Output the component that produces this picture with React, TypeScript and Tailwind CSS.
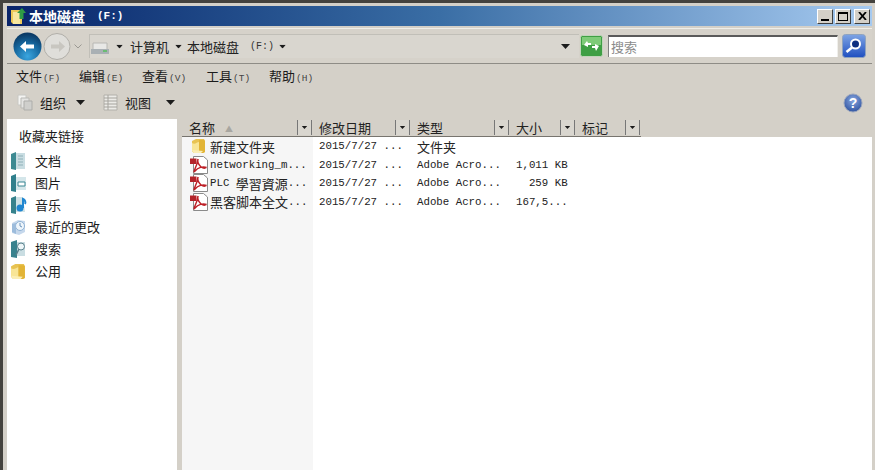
import type { ReactNode } from 'react';

const ZH = "font-['Noto_Sans_CJK_SC','Noto_Sans_CJK_TC',sans-serif]";
const MONO = "font-['Liberation_Mono','Noto_Sans_CJK_SC',monospace]";

function Caret({ className = '' }: { className?: string }) {
  return (
    <svg width="9" height="5" viewBox="0 0 9 5" className={className}>
      <path d="M0 0h9L4.500 5z" fill="#1c1c1c" />
    </svg>
  );
}

function Small({ children }: { children: ReactNode }) {
  return <span className={`${MONO} text-[9.500px] text-[#444] ml-[1px]`}>{children}</span>;
}

function FolderIcon({ size = 16 }: { size?: number }) {
  return (
    <svg width={size} height={size} viewBox="0 0 16 16">
      <path d="M1 3l4-2h8l1 2v11l-2 1H3l-2-2z" fill="#e8c352" />
      <path d="M1 5c3 2 5-1 7-1v11H3l-2-2z" fill="#f8e596" />
      <path d="M8 2h5l1 1v11l-2 1H8z" fill="#e2b436" />
      <path d="M1 12l2 3h7l2-2z" fill="#fbeeb5" />
    </svg>
  );
}

function PdfIcon() {
  return (
    <svg width="18" height="18" viewBox="0 0 18 18" className="shrink-0">
      <path d="M3.500 .5h10l4 3.500v13.500h-14z" fill="#fff" stroke="#8a8a8a" />
      <path d="M0 2.500h6.500v5.500H0z" fill="#b3242a" />
      <path
        d="M8 3c-1 3 1 6 3 8 1.500 1 4 1.500 5.500.5M16.500 11.500C13 10 8 11.500 5 15c-.8 1-1.500 1.500-.5-1 1.500-3 3-6 3.500-11"
        fill="none"
        stroke="#bd1f26"
        strokeWidth="1.500"
      />
    </svg>
  );
}

function NavIcon({ kind }: { kind: string }) {
  if (kind === 'doc')
    return (
      <svg width="17" height="18" viewBox="0 0 17 18">
        <path d="M1 2l5-2v18l-5-1z" fill="#3d8a92" />
        <path d="M6 1h9v16H6z" fill="#c9dde2" />
        <path d="M8 4h5M8 7h5M8 10h5M8 13h5" stroke="#8fb0b8" />
      </svg>
    );
  if (kind === 'pic')
    return (
      <svg width="17" height="18" viewBox="0 0 17 18">
        <path d="M1 2l5-2v18l-5-1z" fill="#2f7f8c" />
        <path d="M6 3h10v13H6z" fill="#d4e6ea" />
        <path d="M8 8h7v4H8z" fill="#fff" stroke="#3b8794" />
      </svg>
    );
  if (kind === 'music')
    return (
      <svg width="17" height="18" viewBox="0 0 17 18">
        <path d="M1 2l5-2v18l-5-1z" fill="#36828c" />
        <path d="M6 1h7l2 15H6z" fill="#cfe2e6" />
        <circle cx="10" cy="12" r="3.500" fill="#1f86d0" />
        <path d="M13 12V3c2 1 3 3 2 5" fill="none" stroke="#1f86d0" strokeWidth="2" />
      </svg>
    );
  if (kind === 'recent')
    return (
      <svg width="17" height="18" viewBox="0 0 17 18">
        <path d="M2 5l6-3 7 1v11l-6 3-7-2z" fill="#c6d8ec" />
        <circle cx="10" cy="8" r="4.500" fill="#eef5fb" stroke="#8fb2d4" />
        <path d="M10 5v3l2 1" fill="none" stroke="#6a93bb" />
        <path d="M2 6l4-1v11l-4-2z" fill="#9dbcdc" />
      </svg>
    );
  if (kind === 'search')
    return (
      <svg width="17" height="18" viewBox="0 0 17 18">
        <path d="M1 2l6-2v18l-6-1z" fill="#39828e" />
        <path d="M7 2h8v14H7z" fill="#c9dde2" />
        <circle cx="11" cy="6.500" r="3.500" fill="#eef6f8" stroke="#59808c" />
        <path d="M9 9l-3 6" stroke="#59808c" strokeWidth="1.500" />
      </svg>
    );
  return <FolderIcon size={17} />;
}

function WinButton({ children }: { children: ReactNode }) {
  return (
    <div className="w-[16px] h-[15px] bg-[#d4d0c8] border border-t-white border-l-white border-r-[#404040] border-b-[#404040] flex items-center justify-center">
      {children}
    </div>
  );
}

function TitleBar() {
  return (
    <div className="h-[20px] flex items-center pl-[3px] pr-[2px] bg-gradient-to-r from-[#0a246a] via-[#3a6ea5] to-[#a6caf0]">
      <svg width="17" height="18" viewBox="0 0 17 18">
        <path d="M1 3h11v14H3l-2-2z" fill="#ecc95a" />
        <path d="M3 5h7v12H3z" fill="#f7e7a0" />
        <path d="M12 1l4 5h-2.500v6h-4V6H7z" fill="#2f9a45" />
      </svg>
      <span className={`${ZH} ml-[2px] text-[14px] font-bold text-white leading-none`}>本地磁盘</span>
      <span className={`${MONO} ml-[12px] text-[11px] font-bold text-white leading-none`}>(F:)</span>
      <div className="ml-auto flex gap-[2px]">
        <WinButton>
          <div className="w-[8px] h-[2px] bg-black mt-[8px]" />
        </WinButton>
        <WinButton>
          <div className="w-[10px] h-[9px] border border-black border-t-2" />
        </WinButton>
        <div className="ml-[1px]">
          <WinButton>
            <svg width="9" height="8" viewBox="0 0 9 8">
              <path d="M1 0l7 8M8 0L1 8" stroke="#000" strokeWidth="1.800" />
            </svg>
          </WinButton>
        </div>
      </div>
    </div>
  );
}

function AddressBar() {
  return (
    <div className="mt-[2px] h-[36px] flex items-center bg-[#d6d2ca] border-y border-t-[#efeee9] border-b-[#8e8c86] pl-[6px] pr-[6px]">
      <svg width="29" height="29" viewBox="0 0 29 29" className="shrink-0">
        <defs>
          <radialGradient id="orb" cx="50%" cy="85%" r="80%">
            <stop offset="0" stopColor="#3aa6e0" />
            <stop offset="0.6" stopColor="#16679e" />
            <stop offset="1" stopColor="#0b3a66" />
          </radialGradient>
        </defs>
        <circle cx="14.500" cy="14.500" r="14" fill="url(#orb)" />
        <path d="M7 14.500l6-5.500v3.500h8v4h-8V20z" fill="#fff" />
      </svg>
      <svg width="30" height="29" viewBox="0 0 30 29" className="shrink-0 ml-[1px]">
        <circle cx="14" cy="14.500" r="13" fill="#dfdeda" stroke="#b1afa9" />
        <path d="M22 14.500l-6-5.500v3.500H8v4h8V20z" fill="#c8c6c0" />
      </svg>
      <svg width="8" height="5" viewBox="0 0 8 5" className="shrink-0 ml-[1px]">
        <path d="M.5.500L4 4 7.500.500" fill="none" stroke="#9b9993" />
      </svg>
      <div className="ml-[7px] flex-1 h-[24px] flex items-center border-l border-t border-[#c1bfb8] border-r-0 bg-[#d9d6cf] pl-[1px]">
        <svg width="18" height="13" viewBox="0 0 18 13" className="mt-[4px]">
          <path d="M2 1h14v7H2z" fill="#e8e8e6" stroke="#b8b8b4" />
          <path d="M0 7h18v5H0z" fill="#a9b0b4" />
          <path d="M12 9h4" stroke="#56c05c" strokeWidth="1.500" />
        </svg>
        <Caret className="ml-[6px] scale-75" />
        <span className={`${ZH} ml-[6px] text-[13px] text-[#222]`}>计算机</span>
        <Caret className="ml-[5px] scale-75" />
        <span className={`${ZH} ml-[4px] text-[13px] text-[#222]`}>本地磁盘</span>
        <span className={`${MONO} ml-[11px] text-[10px] text-[#333]`}>(F:)</span>
        <Caret className="ml-[4px] scale-75" />
        <Caret className="ml-auto mr-[9px]" />
      </div>
      <svg width="23" height="22" viewBox="0 0 23 22" className="shrink-0 ml-[1px]">
        <rect x=".5" y=".5" width="22" height="21" rx="2" fill="#3f9f44" stroke="#c1d4ba" />
        <rect x="2" y="2" width="19" height="8" fill="#7ecb78" />
        <path d="M4 10l3-4 1 2h3v2H8v2zM19 11l-3 5-1-3h-3v-2h3V9z" fill="#fff" />
      </svg>
      <div className="ml-[5px] w-[230px] h-[22px] bg-white border-t-2 border-l border-t-[#5a5a5a] border-l-[#808080] border-r border-r-[#f0efeb] flex items-center pl-[2px]">
        <span className={`${ZH} text-[13px] text-[#8b8b8b]`}>搜索</span>
      </div>
      <svg width="24" height="24" viewBox="0 0 24 24" className="shrink-0 ml-[4px]">
        <defs>
          <linearGradient id="sb" x1="0" y1="0" x2="0" y2="1">
            <stop offset="0" stopColor="#7ea4e4" />
            <stop offset="1" stopColor="#1f4fc0" />
          </linearGradient>
        </defs>
        <rect x=".5" y=".5" width="23" height="23" rx="3" fill="url(#sb)" stroke="#8ea3bf" />
        <circle cx="13.500" cy="10" r="4.500" fill="#0e2f80" stroke="#fff" strokeWidth="2" />
        <path d="M10 13.500L4.500 18" stroke="#fff" strokeWidth="2.500" />
      </svg>
    </div>
  );
}

const MENU = [
  { label: '文件', key: '(F)', width: 'w-[63px]' },
  { label: '编辑', key: '(E)', width: 'w-[63px]' },
  { label: '查看', key: '(V)', width: 'w-[64px]' },
  { label: '工具', key: '(T)', width: 'w-[63px]' },
  { label: '帮助', key: '(H)', width: 'w-[63px]' },
];

function MenuBar() {
  return (
    <div className="h-[25px] pl-[9px] flex items-center">
      {MENU.map((m) => (
        <div key={m.label} className={`${m.width} flex items-baseline`}>
          <span className={`${ZH} text-[13px] text-[#1b1b1b]`}>{m.label}</span>
          <Small>{m.key}</Small>
        </div>
      ))}
    </div>
  );
}

function Toolbar() {
  return (
    <div className="h-[27px] pl-[10px] pr-[9px] flex items-center">
      <svg width="16" height="17" viewBox="0 0 16 17">
        <path d="M1 1h8v10H1z" fill="#f4f4f2" stroke="#c8c8c4" />
        <path d="M4 4h8v10H4z" fill="#e4e4e2" stroke="#b9b9b5" />
        <path d="M7 7h8v9H7z" fill="#cfcfcc" stroke="#adadaa" />
      </svg>
      <span className={`${ZH} ml-[7px] text-[13px] text-[#1b1b1b]`}>组织</span>
      <Caret className="ml-[10px]" />
      <svg width="15" height="17" viewBox="0 0 15 17" className="ml-[18px]">
        <path d="M1 1h13v15H1z" fill="#ecebe7" stroke="#b2b0aa" />
        <path d="M5 1v15M1 4h13M1 7h13M1 10h13M1 13h13" stroke="#a5a39d" />
      </svg>
      <span className={`${ZH} ml-[7px] text-[13px] text-[#1b1b1b]`}>视图</span>
      <Caret className="ml-[15px]" />
      <svg width="20" height="20" viewBox="0 0 20 20" className="ml-auto">
        <defs>
          <radialGradient id="help" cx="50%" cy="35%" r="70%">
            <stop offset="0" stopColor="#8aa8e0" />
            <stop offset="1" stopColor="#2a4e9c" />
          </radialGradient>
        </defs>
        <circle cx="10" cy="10" r="9" fill="url(#help)" stroke="#9aa5bd" />
        <text x="10" y="15" textAnchor="middle" fontSize="14" fontWeight="700" fontFamily="Liberation Sans" fill="#fff">
          ?
        </text>
      </svg>
    </div>
  );
}

const NAV = [
  { icon: 'doc', label: '文档' },
  { icon: 'pic', label: '图片' },
  { icon: 'music', label: '音乐' },
  { icon: 'recent', label: '最近的更改' },
  { icon: 'search', label: '搜索' },
  { icon: 'public', label: '公用' },
];

function Sidebar() {
  return (
    <div className="w-[170px] shrink-0 bg-white pl-[3px]">
      <div className={`${ZH} pl-[9px] pt-[7px] h-[31px] text-[13px] text-[#1b1b1b]`}>收藏夹链接</div>
      {NAV.map((n) => (
        <div key={n.label} className="h-[22px] flex items-center">
          <NavIcon kind={n.icon} />
          <span className={`${ZH} ml-[8px] text-[13px] text-[#1b1b1b]`}>{n.label}</span>
        </div>
      ))}
    </div>
  );
}

function HeaderCell({ label, sorted }: { label: string; sorted?: boolean }) {
  return (
    <div className="w-full h-[18px] shrink-0 flex items-center border-b border-[#77746e]">
      <span className={`${ZH} flex-1 ${sorted ? 'pl-[7px]' : 'pl-[6px]'} text-[13px] leading-none text-[#222]`}>
        {label}
        {sorted && <span className="ml-[10px] inline-block text-[8px] text-[#a8a6a0] align-middle">▲</span>}
      </span>
      <div className="w-[15px] h-[15px] mr-[1px] bg-[#d9d6cf] border-x border-[#777] flex items-center justify-center">
        <Caret className="scale-[0.6]" />
      </div>
    </div>
  );
}

function Cell({ children }: { children: ReactNode }) {
  return (
    <div className={`h-[18.500px] flex items-center whitespace-pre text-[10.750px] text-[#222] ${MONO}`}>
      {children}
    </div>
  );
}

function Zh({ children }: { children: ReactNode }) {
  return <span className={`${ZH} text-[13px]`}>{children}</span>;
}

function Column({
  label,
  width,
  sorted,
  tint,
  cells,
}: {
  label: string;
  width: string;
  sorted?: boolean;
  tint?: boolean;
  cells: ReactNode;
}) {
  return (
    <div className={`${width} shrink-0 flex flex-col`}>
      <div className="bg-[#d4d0c8]">
        <HeaderCell label={label} sorted={sorted} />
      </div>
      <div className={`flex-1 ${tint ? 'bg-[#f6f6f6]' : 'bg-white'}`}>{cells}</div>
    </div>
  );
}

function FileList() {
  const dates = ['2015/7/27 ...', '2015/7/27 ...', '2015/7/27 ...', '2015/7/27 ...'];
  return (
    <div className="flex-1 flex bg-white">
      <Column
        label="名称"
        sorted
        tint
        width="w-[131px]"
        cells={
          <div className="pl-[8px]">
            <Cell>
              <span className="w-[20px] pl-[1px]">
                <FolderIcon />
              </span>
              <Zh>新建文件夹</Zh>
            </Cell>
            <Cell>
              <span className="w-[20px]">
                <PdfIcon />
              </span>
              networking_m...
            </Cell>
            <Cell>
              <span className="w-[20px]">
                <PdfIcon />
              </span>
              PLC <span className="font-['Noto_Sans_CJK_TC',sans-serif] text-[13px]">學習資源</span>...
            </Cell>
            <Cell>
              <span className="w-[20px]">
                <PdfIcon />
              </span>
              <Zh>黑客脚本全文</Zh>...
            </Cell>
          </div>
        }
      />
      <Column
        label="修改日期"
        width="w-[98px]"
        cells={
          <div className="pl-[6px]">
            {dates.map((d, i) => (
              <Cell key={i}>{d}</Cell>
            ))}
          </div>
        }
      />
      <Column
        label="类型"
        width="w-[99px]"
        cells={
          <div className="pl-[6px]">
            <Cell>
              <Zh>文件夹</Zh>
            </Cell>
            <Cell>Adobe Acro...</Cell>
            <Cell>Adobe Acro...</Cell>
            <Cell>Adobe Acro...</Cell>
          </div>
        }
      />
      <Column
        label="大小"
        width="w-[66px]"
        cells={
          <div className="pl-[6px]">
            <Cell> </Cell>
            <Cell>1,011 KB</Cell>
            <Cell>{'  259 KB'}</Cell>
            <Cell>167,5...</Cell>
          </div>
        }
      />
      <Column label="标记" width="w-[65px]" cells={null} />
      <div className="flex-1 flex flex-col">
        <div className="h-[18px] bg-[#d4d0c8]" />
      </div>
    </div>
  );
}

export default function App() {
  return (
    <div className="w-[875px] h-[470px] overflow-hidden bg-[#44423e] pt-[3px] pl-[3px]">
      <div className="h-[467px] bg-[#d4d0c8] pt-[3px] pl-[4px] pr-[3px] flex flex-col">
        <TitleBar />
        <AddressBar />
        <MenuBar />
        <Toolbar />
        <div className="mt-[3px] flex-1 min-h-0 flex">
          <Sidebar />
          <div className="w-[5px] shrink-0 bg-[#d4d0c8]" />
          <FileList />
        </div>
      </div>
    </div>
  );
}
